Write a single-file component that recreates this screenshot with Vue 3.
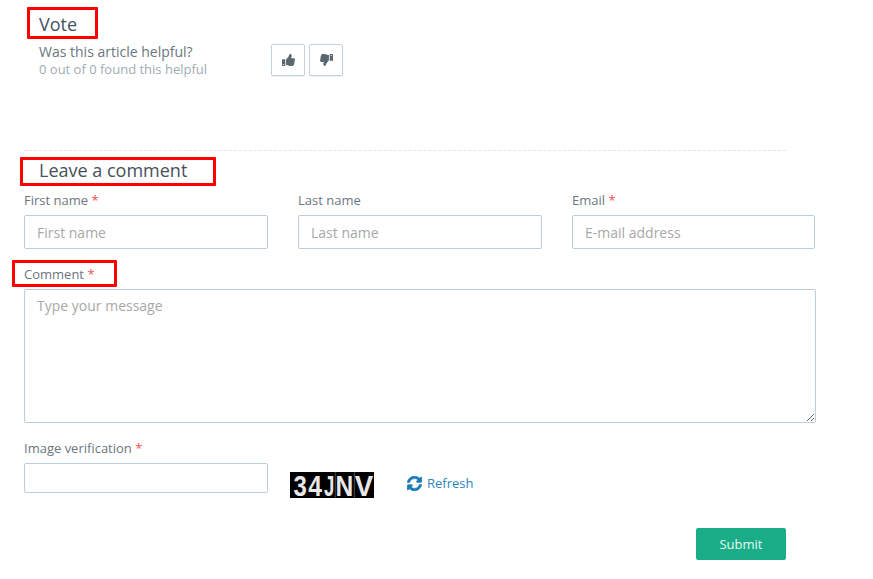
<script setup>
const upPath = 'M104 224H24c-13.255 0-24 10.745-24 24v240c0 13.255 10.745 24 24 24h80c13.255 0 24-10.745 24-24V248c0-13.255-10.745-24-24-24zM64 472c-13.255 0-24-10.745-24-24s10.745-24 24-24 24 10.745 24 24-10.745 24-24 24zM384 81.452c0 42.416-25.97 66.208-33.277 94.548h101.723c33.397 0 59.397 27.746 59.553 58.098.084 17.938-7.546 37.249-19.439 49.197l-.11.11c9.836 23.337 8.237 56.037-9.308 79.469 8.681 25.895-.069 57.704-16.382 74.757 4.298 17.598 2.244 32.575-6.148 44.632C440.202 511.587 389.616 512 346.839 512l-2.845-.001c-48.287-.017-87.806-17.598-119.56-31.725-15.957-7.099-36.821-15.887-52.651-16.178-6.54-.12-11.783-5.457-11.783-11.998v-213.77c0-3.2 1.282-6.271 3.558-8.521 39.614-39.144 56.648-80.587 89.117-113.111 14.804-14.832 20.188-37.236 25.393-58.902C282.515 39.293 291.817 0 312 0c24 0 72 8 72 81.452z'
const syncPath = 'M370.72 133.28C339.458 104.008 298.888 87.962 255.848 88c-77.458.068-144.328 53.178-162.791 126.85-1.344 5.363-6.122 9.15-11.651 9.15H24.103c-7.498 0-13.194-6.807-11.807-14.176C33.933 94.924 134.813 8 256 8c66.448 0 126.791 26.136 171.315 68.685L463.03 40.97C478.149 25.851 504 36.559 504 57.941V192c0 13.255-10.745 24-24 24H345.941c-21.382 0-32.09-25.851-16.971-40.971l41.75-41.749zM32 296h134.059c21.382 0 32.09 25.851 16.971 40.971l-41.75 41.75c31.262 29.273 71.835 45.319 114.876 45.28 77.418-.07 144.315-53.144 162.787-126.849 1.344-5.363 6.122-9.15 11.651-9.15h57.304c7.498 0 13.194 6.807 11.807 14.176C478.067 417.076 377.187 504 256 504c-66.448 0-126.791-26.136-171.315-68.685L48.97 471.03C33.851 486.149 8 475.441 8 454.059V320c0-13.255 10.745-24 24-24z'
const fields = [
  { label: 'First name', placeholder: 'First name', required: true },
  { label: 'Last name', placeholder: 'Last name', required: false },
  { label: 'Email', placeholder: 'E-mail address', required: true },
]
const captcha = [
  { ch: '3', cls: 'c-3' },
  { ch: '4', cls: 'c-4' },
  { ch: 'J', cls: 'c-j' },
  { ch: 'N', cls: 'c-n' },
  { ch: 'V', cls: 'c-v' },
]
</script>

<template>
  <div class="page">
    <section class="vote">
      <h3 class="title vote-title">Vote<span class="mark mark-vote"></span></h3>
      <div class="vote-row">
        <div class="vote-text">
          <div class="question">Was this article helpful?</div>
          <div class="count">0 out of 0 found this helpful</div>
        </div>
        <div class="vote-buttons">
          <button class="vote-btn" type="button" aria-label="Yes">
            <svg viewBox="0 0 512 512" width="13" height="12" preserveAspectRatio="none"><path :d="upPath" /></svg>
          </button>
          <button class="vote-btn" type="button" aria-label="No">
            <svg class="flip" viewBox="0 0 512 512" width="13" height="12" preserveAspectRatio="none"><path :d="upPath" /></svg>
          </button>
        </div>
      </div>
    </section>

    <div class="divider"></div>

    <h3 class="title comment-title">Leave a comment<span class="mark mark-leave"></span></h3>

    <form class="form" @submit.prevent>
      <div class="fields">
        <div v-for="f in fields" :key="f.label" class="field">
          <label class="label">{{ f.label }}<span v-if="f.required" class="req"> *</span></label>
          <input class="input" :placeholder="f.placeholder" />
        </div>
      </div>

      <label class="label comment-label">Comment <span class="req">*</span><span class="mark mark-comment"></span></label>
      <textarea class="textarea" placeholder="Type your message"></textarea>

      <label class="label verify-label">Image verification <span class="req">*</span></label>
      <div class="verify-row">
        <input class="input verify-input" />
        <div class="captcha">
          <span v-for="c in captcha" :key="c.ch" class="glyph" :class="c.cls">{{ c.ch }}</span>
        </div>
        <a class="refresh">
          <svg viewBox="0 0 512 512" width="15" height="15"><path :d="syncPath" /></svg>
          Refresh
        </a>
      </div>

      <div class="actions">
        <button class="submit" type="submit">Submit</button>
      </div>
    </form>
  </div>
</template>

<style>
body { background: #fff; }
</style>

<style scoped>
.page {
  width: 849px;
  height: 579px;
  padding-left: 24px;
  box-sizing: border-box;
  font-family: "Open Sans", "Noto Sans", sans-serif;
  color: #6b7680;
  background: #fff;
}
.title {
  position: relative;
  margin: 0;
  font-size: 18px;
  font-weight: 400;
  line-height: 24px;
  color: #46515c;
  padding-left: 15px;
}
.vote-title { padding-top: 12px; }
.mark {
  position: absolute;
  border: 3px solid #f00;
  border-radius: 1px;
  box-sizing: border-box;
  pointer-events: none;
}
.mark-vote { left: 3px; top: 7px; width: 71px; height: 32px; }
.mark-leave { left: -4px; top: -1px; width: 196px; height: 29px; }
.mark-comment { left: -12px; top: -5px; width: 105px; height: 27px; }
.vote-row {
  display: flex;
  padding-left: 15px;
  margin-top: 7px;
}
.vote-text { width: 232px; }
.question { font-size: 14px; line-height: 18px; color: #6b7680; }
.count { font-size: 13px; line-height: 17px; color: #a0acb3; }
.vote-buttons { display: flex; gap: 4px; margin-top: 1px; }
.vote-btn {
  width: 34px;
  height: 32px;
  padding: 0;
  display: flex;
  align-items: center;
  justify-content: center;
  background: #fff;
  border: 1px solid #c5d1da;
  border-radius: 2px;
  box-shadow: 0 1px 1px rgba(90, 90, 90, 0.1);
}
.vote-btn svg { fill: #5b6770; }
.flip { transform: scale(-1, -1); }
.divider {
  width: 762px;
  margin-top: 72px;
  border-top: 1px dashed #dfe5ea;
}
.comment-title { margin-top: 7px; }
.form { width: 792px; }
.fields {
  display: flex;
  gap: 30px;
  margin-top: 9px;
}
.field { width: 244px; }
.field:last-child { width: 243px; }
.label {
  position: relative;
  display: block;
  font-size: 13px;
  line-height: 18px;
  color: #6b7680;
}
.req { color: #f05050; }
.input {
  display: block;
  width: 100%;
  height: 34px;
  margin-top: 6px;
  padding: 0 12px;
  box-sizing: border-box;
  border: 1px solid #bfcdd8;
  border-radius: 2px;
  background: #fff;
  font: 14px "Open Sans", "Noto Sans", sans-serif;
  color: #5b6770;
  outline: none;
}
.input::placeholder, .textarea::placeholder { color: #a8a8a8; opacity: 1; }
.comment-label { margin-top: 16px; width: max-content; }
.textarea {
  display: block;
  width: 792px;
  height: 134px;
  margin-top: 6px;
  padding: 6px 12px;
  box-sizing: border-box;
  border: 1px solid #bfcdd8;
  border-radius: 2px;
  background: #fff;
  font: 14px/20px "Open Sans", "Noto Sans", sans-serif;
  outline: none;
}
.verify-label { margin-top: 16px; }
.verify-row {
  display: flex;
  align-items: flex-start;
}
.verify-input { width: 244px; height: 30px; flex: none; }
.captcha {
  display: flex;
  align-items: center;
  flex: none;
  width: 84px;
  height: 26px;
  margin: 15px 0 0 22px;
  padding-left: 2px;
  box-sizing: border-box;
  background: #000;
}
.glyph {
  display: block;
  flex: none;
  height: 26px;
  text-align: center;
  color: #e8e8e8;
  font: 700 30px/27px "Liberation Sans", sans-serif;
}
.c-3 { width: 15px; transform: scaleX(0.8); }
.c-4 { width: 15px; transform: scaleX(0.82); }
.c-j { width: 11px; transform: scaleX(0.62); }
.c-n { width: 20px; transform: scaleX(0.82); border-left: 1px solid #555; box-sizing: border-box; }
.c-v { width: 21px; transform: scaleX(0.92); border-left: 1px solid #555; box-sizing: border-box; }
.refresh {
  display: flex;
  align-items: center;
  gap: 5px;
  margin: 17px 0 0 33px;
  font-size: 13px;
  line-height: 18px;
  color: #2a85c0;
}
.refresh svg { fill: #1c7ab8; stroke: #1c7ab8; stroke-width: 24; }
.actions {
  display: flex;
  justify-content: flex-end;
  width: 762px;
  margin-top: 30px;
}
.submit {
  width: 90px;
  height: 32px;
  padding: 0;
  border: 0;
  border-radius: 2px;
  background: #1aae88;
  color: #e6f7f2;
  font: 500 13px "Open Sans", "Noto Sans", sans-serif;
}
</style>
